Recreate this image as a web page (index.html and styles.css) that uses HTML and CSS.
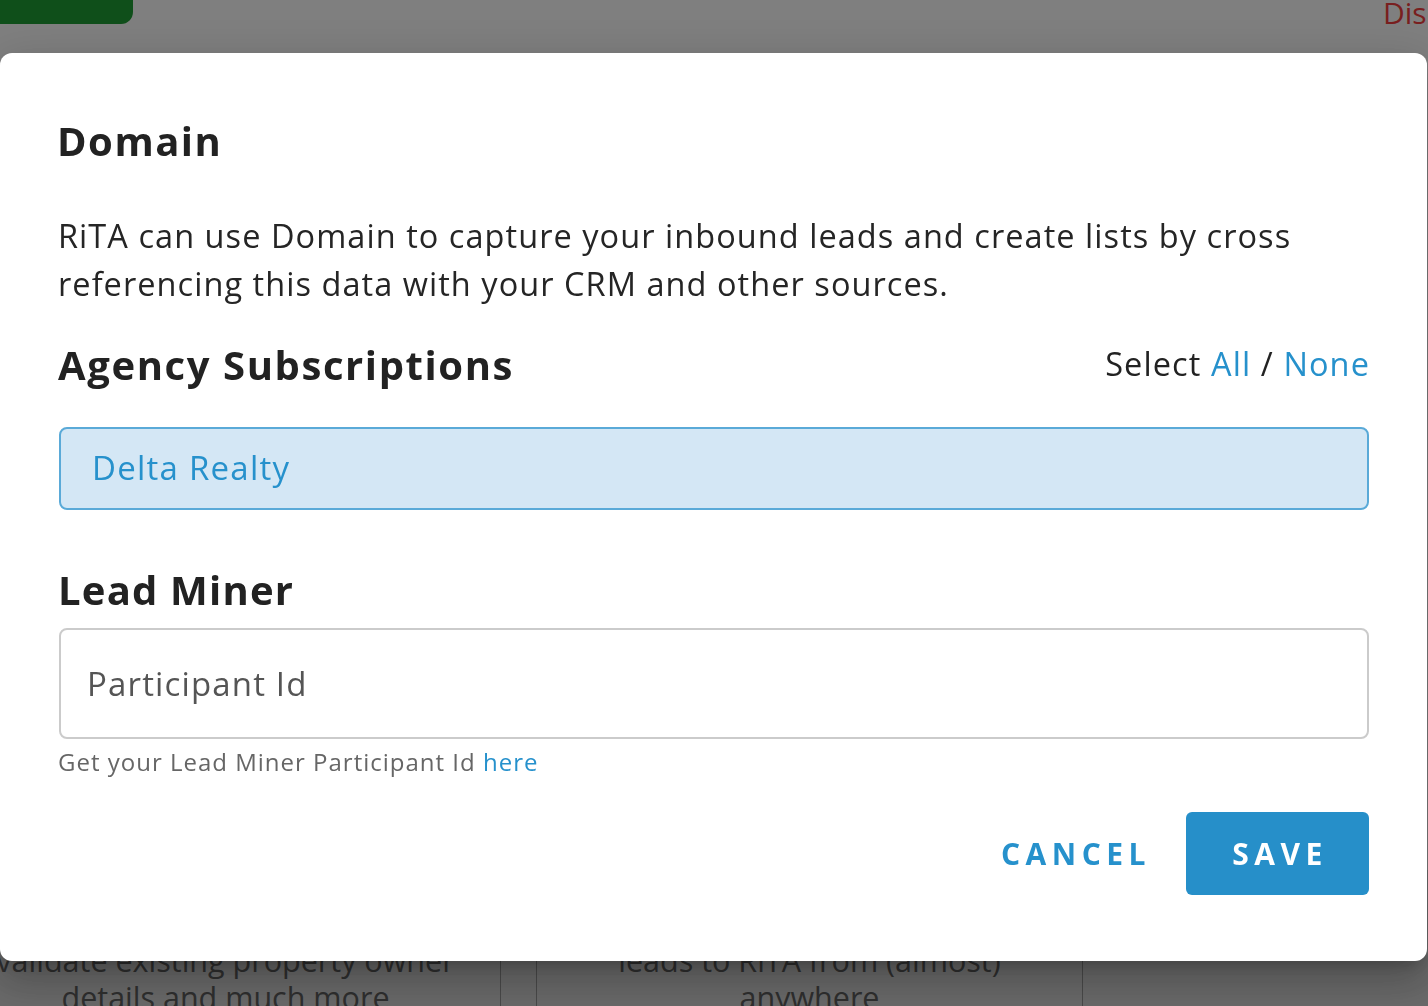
FILE: index.html
```html
<!DOCTYPE html>
<html lang="en">
<head>
<meta charset="utf-8">
<title>Domain</title>
<link rel="stylesheet" href="styles.css">
</head>
<body>
<div class="page">
  <header class="topbar">
    <span class="green-btn"></span>
    <span class="danger-link">Disconnect</span>
  </header>
  <main class="cards">
    <div class="card">
      <p>Search and enrich contacts,<br>validate existing property owner<br>details and much more</p>
    </div>
    <div class="card">
      <p>Send new and existing<br>leads to RiTA from (almost)<br>anywhere</p>
    </div>
    <div class="card card-last">
      <p></p>
    </div>
  </main>
</div>

<div class="overlay"></div>

<section class="modal">
  <h2 class="title">Domain</h2>
  <p class="intro">RiTA can use Domain to capture your inbound leads and create lists by cross referencing this data with your CRM and other sources.</p>

  <div class="section-head">
    <h3 class="section-title">Agency Subscriptions</h3>
    <div class="select-links">Select <a class="link">All</a> / <a class="link">None</a></div>
  </div>
  <div class="agency selected">Delta Realty</div>

  <h3 class="section-title lead-title">Lead Miner</h3>
  <input class="text-input" type="text" placeholder="Participant Id">
  <p class="helper">Get your Lead Miner Participant Id <a class="link">here</a></p>

  <div class="actions">
    <button class="btn btn-flat">CANCEL</button>
    <button class="btn btn-primary">SAVE</button>
  </div>
</section>
</body>
</html>
```

FILE: styles.css
```css
html, body {
  margin: 0;
  padding: 0;
  height: 100%;
  overflow: hidden;
}

body {
  font-family: "Open Sans", "Liberation Sans", sans-serif;
  background: #ffffff;
  color: #222;
}

.page {
  height: 1006px;
  display: flex;
  flex-direction: column;
  justify-content: space-between;
  overflow: hidden;
}

.topbar {
  display: flex;
  justify-content: space-between;
  align-items: flex-start;
  height: 60px;
  overflow: hidden;
}

.green-btn {
  display: block;
  width: 133px;
  height: 24px;
  background: #1f9e35;
  border-bottom-right-radius: 12px;
}

.danger-link {
  font-family: "Open Sans", sans-serif;
  font-size: 30px;
  line-height: 26px;
  color: #f23e3e;
  width: 45px;
  overflow: hidden;
  white-space: nowrap;
}

.cards {
  display: grid;
  grid-template-columns: 550px 547px 1fr;
  column-gap: 35px;
  height: 136px;
  margin-left: -49px;
  background: #dcdcdc;
}

.card {
  border-left: 1px solid #999;
  border-right: 1px solid #999;
  display: flex;
  justify-content: center;
  overflow: hidden;
}

.card:first-child {
  border-left: none;
}

.card p {
  margin: 0;
  padding-top: 35px;
  font-family: "Open Sans", sans-serif;
  font-size: 30.5px;
  line-height: 37px;
  text-align: center;
  color: #626262;
  white-space: nowrap;
}

.card-last {
  border: none;
}

.overlay {
  position: fixed;
  inset: 0;
  background: linear-gradient(to bottom, rgba(0,0,0,0.5) 0%, rgba(0,0,0,0.52) 100%);
}

.modal {
  position: fixed;
  top: 53px;
  left: 0;
  width: 1427px;
  height: 908px;
  box-sizing: border-box;
  padding: 64px 58px 0 59px;
  background: #fff;
  border-radius: 12px;
  box-shadow: 0 11px 15px -7px rgba(0,0,0,0.2), 0 24px 38px 3px rgba(0,0,0,0.14), 0 9px 46px 8px rgba(0,0,0,0.12);
  display: flex;
  flex-direction: column;
}

.title {
  margin: 0 0 0 -2px;
  font-size: 40px;
  line-height: 48px;
  font-weight: 700;
  color: #222;
  letter-spacing: 1.5px;
}

.intro {
  margin: 47px 0 0 -1px;
  font-size: 32.5px;
  line-height: 48px;
  color: #252525;
  letter-spacing: 1.05px;
}

.section-head {
  margin-top: 33px;
  display: flex;
  justify-content: space-between;
  align-items: center;
  height: 48px;
}

.section-title {
  margin: 0 0 0 -1px;
  font-size: 40px;
  line-height: 48px;
  font-weight: 700;
  color: #222;
  letter-spacing: 1.6px;
}

.lead-title {
  margin-top: 56px;
  letter-spacing: 1.2px;
}

.select-links {
  font-size: 32.5px;
  line-height: 48px;
  color: #222;
  margin-top: -2px;
  letter-spacing: 1.1px;
  margin-right: -1px;
}

.link {
  color: #2691cc;
  text-decoration: none;
  cursor: pointer;
}

.agency {
  margin-top: 38px;
  height: 83px;
  box-sizing: border-box;
  border: 2px solid #5aaad8;
  border-radius: 8px;
  background: #d4e7f5;
  color: #2691cc;
  font-size: 33px;
  line-height: 78px;
  padding-left: 31px;
  letter-spacing: 1.25px;
}

.text-input {
  margin-top: 14px;
  height: 111px;
  box-sizing: border-box;
  border: 2px solid #cbcbcb;
  border-radius: 8px;
  padding: 0 26px;
  font-family: "Open Sans", sans-serif;
  font-size: 33px;
  color: #222;
  outline: none;
  width: 100%;
  letter-spacing: 1.15px;
}

.text-input::placeholder {
  color: #555;
}

.helper {
  margin: 8px 0 0 -1px;
  font-size: 24px;
  line-height: 30px;
  color: #666;
  letter-spacing: 1px;
}

.actions {
  margin-top: 35px;
  display: flex;
  justify-content: flex-end;
  align-items: center;
  gap: 40px;
}

.btn {
  font-family: "Open Sans", sans-serif;
  font-weight: 700;
  font-size: 30px;
  letter-spacing: 5.5px;
  border: none;
  cursor: pointer;
  border-radius: 6px;
  height: 83px;
}

.btn-flat {
  background: transparent;
  color: #2691cc;
  padding: 0;
  margin-right: -5px;
}

.btn-primary {
  background: #268fc9;
  color: #fff;
  width: 183px;
  padding: 0 0 0 5px;
}
```
